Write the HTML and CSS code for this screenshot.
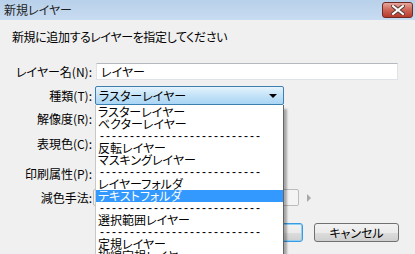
FILE: index.html
```html
<!DOCTYPE html>
<html lang="ja">
<head>
    <meta charset="UTF-8">
    <title>新規レイヤー</title>
    <link rel="stylesheet" href="styles.css">
</head>
<body>
    <div class="window">
        <!-- Title bar -->
        <div class="titlebar">
            <span class="title">新規レイヤー</span>
            <div class="close">
                <svg width="14" height="10" viewBox="0 0 14 10">
                    <path d="M2 1 L12 9 M12 1 L2 9" stroke="#5a3a36" stroke-width="4" stroke-linecap="square"/>
                    <path d="M2 1 L12 9 M12 1 L2 9" stroke="#fff" stroke-width="2" stroke-linecap="square"/>
                </svg>
            </div>
        </div>

        <div class="content">
            <p class="intro">新規に追加するレイヤーを指定してください</p>

            <div class="row row-name">
                <label>レイヤー名(N):</label>
                <div class="textbox">レイヤー</div>
            </div>

            <div class="row row-type">
                <label>種類(T):</label>
                <div class="combo-wrap">
                    <div class="combo">ラスターレイヤー<span class="arrow"></span></div>
                    <!-- open dropdown list -->
                    <ul class="dropdown">
                        <li>ラスターレイヤー</li>
                        <li>ベクターレイヤー</li>
                        <li class="sep">---------------------------</li>
                        <li>反転レイヤー</li>
                        <li>マスキングレイヤー</li>
                        <li class="sep">---------------------------</li>
                        <li>レイヤーフォルダ</li>
                        <li class="selected">テキストフォルダ</li>
                        <li class="sep">---------------------------</li>
                        <li>選択範囲レイヤー</li>
                        <li class="sep">---------------------------</li>
                        <li>定規レイヤー</li>
                        <li>投線定規レイヤー</li>
                    </ul>
                </div>
            </div>

            <div class="row row-res">
                <label>解像度(R):</label>
            </div>

            <div class="row row-color">
                <label>表現色(C):</label>
            </div>

            <div class="row row-print">
                <label>印刷属性(P):</label>
            </div>

            <div class="row row-reduce">
                <label>減色手法:</label>
                <div class="small-combo"></div>
                <span class="spin-arrow"></span>
            </div>

            <div class="buttons">
                <button class="btn btn-ok">OK</button>
                <button class="btn">キャンセル</button>
            </div>
        </div>
    </div>
</body>
</html>
```

FILE: styles.css
```css
body {
    margin: 0;
    padding: 0;
    background-color: #f0f0f0;
    font-family: 'Noto Sans CJK JP', 'Liberation Sans', sans-serif;
    font-size: 12px;
    font-feature-settings: "palt";
    color: #000;
}

.window {
    width: 415px;
    height: 254px;
    overflow: hidden;
    background-color: #f0f0f0;
}

.titlebar {
    height: 20px;
    display: flex;
    justify-content: space-between;
    align-items: flex-start;
    background: linear-gradient(#b8d0ea, #c8dcf1);
}

.title {
    margin-left: 4px;
    line-height: 20px;
    color: #1e1e1e;
}

.close {
    width: 29px;
    height: 14px;
    margin-top: 2px;
    margin-right: 2px;
    display: flex;
    align-items: center;
    justify-content: center;
    border: 1px solid #6e2a24;
    border-radius: 3px;
    background: linear-gradient(#e6a79d, #cf6a5c 45%, #b83a2a);
}

.content {
    display: flex;
    flex-direction: column;
}

.intro {
    margin: 10px 0 0 12px;
    line-height: 14px;
    letter-spacing: -0.4px;
}

.row {
    display: flex;
    align-items: center;
    height: 18px;
}

.row label {
    width: 92px;
    text-align: right;
    margin-right: 3px;
    flex-shrink: 0;
}

.row-name {
    margin-top: 19px;
    height: 17px;
}

.textbox {
    width: 296px;
    height: 15px;
    margin-left: 1px;
    padding-left: 4px;
    line-height: 15px;
    background-color: #fff;
    border: 1px solid #dfe3e8;
    border-top-color: #b5b9bf;
}

.row-type {
    margin-top: 6px;
    height: 19px;
}

.combo-wrap {
    position: relative;
    width: 189px;
    height: 19px;
}

.combo {
    box-sizing: border-box;
    height: 19px;
    padding-left: 3px;
    line-height: 17px;
    border: 1px solid #3c7fb1;
    border-radius: 2px;
    background: linear-gradient(#e5f3fc, #c4e3f8 50%, #a9d5f4);
}

.arrow {
    position: absolute;
    right: 7px;
    top: 8px;
    border-left: 4px solid transparent;
    border-right: 4px solid transparent;
    border-top: 4px solid #000;
}

.dropdown {
    position: absolute;
    top: 100%;
    left: 0;
    z-index: 10;
    box-sizing: border-box;
    width: 189px;
    margin: 0;
    padding: 1px 0 0 0;
    list-style: none;
    background-color: #fff;
    border-left: 1px solid #c8c8c8;
    border-right: 1px solid #646464;
    box-shadow: 3px 4px 2px rgba(0, 0, 0, 0.3);
}

.dropdown li {
    height: 12px;
    line-height: 12px;
    padding-left: 2px;
    white-space: nowrap;
}

.dropdown .sep {
    font-family: 'Liberation Sans', sans-serif;
    letter-spacing: 2px;
    padding-left: 4px;
}

.dropdown .selected {
    background-color: #3399ff;
    color: #fff;
}

.row-res {
    margin-top: 4px;
}

.row-color {
    margin-top: 7px;
}

.row-print {
    margin-top: 12px;
}

.row-reduce {
    margin-top: 7px;
    height: 17px;
}

.row-reduce label {
    margin-right: 1px;
}

.small-combo {
    box-sizing: border-box;
    width: 206px;
    height: 17px;
    border: 1px solid #bcbcbc;
    border-radius: 2px;
    background-color: #f4f4f4;
}

.spin-arrow {
    margin-left: 8px;
    border-top: 4px solid transparent;
    border-bottom: 4px solid transparent;
    border-left: 4px solid #a8a8a8;
}

.buttons {
    display: flex;
    gap: 11px;
    margin-top: 17px;
    padding-left: 218px;
}

.btn {
    width: 85px;
    height: 19px;
    padding: 0;
    font-family: 'Noto Sans CJK JP', 'Liberation Sans', sans-serif;
    font-size: 12px;
    font-feature-settings: "palt";
    line-height: 17px;
    color: #000;
    border: 1px solid #707070;
    border-radius: 3px;
    background: linear-gradient(#f2f2f2, #ebebeb 50%, #dddddd 51%, #cfcfcf);
}

.btn-ok {
    border-color: #3c9ae0;
    box-shadow: inset 0 0 0 1px #8fd0f5;
}
```
